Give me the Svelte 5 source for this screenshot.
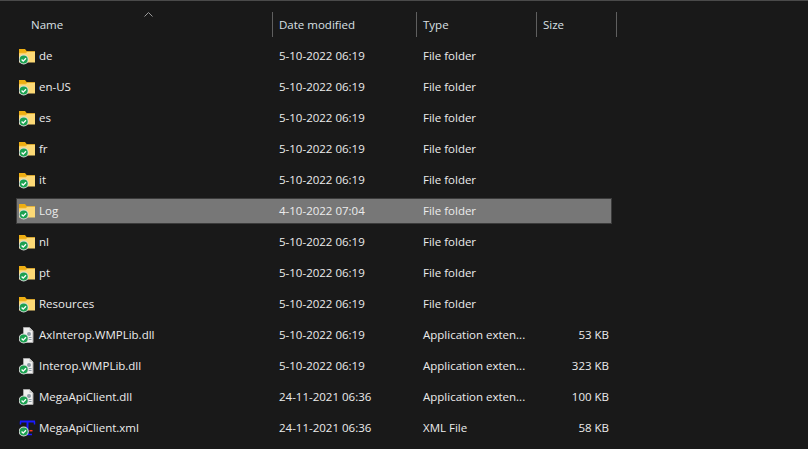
<script>
	const files = [
		{ name: 'de', date: '5-10-2022 06:19', type: 'File folder', size: '', icon: 'folder' },
		{ name: 'en-US', date: '5-10-2022 06:19', type: 'File folder', size: '', icon: 'folder' },
		{ name: 'es', date: '5-10-2022 06:19', type: 'File folder', size: '', icon: 'folder' },
		{ name: 'fr', date: '5-10-2022 06:19', type: 'File folder', size: '', icon: 'folder' },
		{ name: 'it', date: '5-10-2022 06:19', type: 'File folder', size: '', icon: 'folder' },
		{ name: 'Log', date: '4-10-2022 07:04', type: 'File folder', size: '', icon: 'folder', selected: true },
		{ name: 'nl', date: '5-10-2022 06:19', type: 'File folder', size: '', icon: 'folder' },
		{ name: 'pt', date: '5-10-2022 06:19', type: 'File folder', size: '', icon: 'folder' },
		{ name: 'Resources', date: '5-10-2022 06:19', type: 'File folder', size: '', icon: 'folder' },
		{ name: 'AxInterop.WMPLib.dll', date: '5-10-2022 06:19', type: 'Application exten...', size: '53 KB', icon: 'dll' },
		{ name: 'Interop.WMPLib.dll', date: '5-10-2022 06:19', type: 'Application exten...', size: '323 KB', icon: 'dll' },
		{ name: 'MegaApiClient.dll', date: '24-11-2021 06:36', type: 'Application exten...', size: '100 KB', icon: 'dll' },
		{ name: 'MegaApiClient.xml', date: '24-11-2021 06:36', type: 'XML File', size: '58 KB', icon: 'xml' }
	];
</script>

<div class="explorer">
	<div class="header">
		<div class="head name">Name<span class="caret"><svg width="9" height="5" viewBox="0 0 9 5"><path d="M.5 4.500l4-4 4 4" fill="none" stroke="#9a9a9a"/></svg></span></div>
		<div class="head">Date modified</div>
		<div class="head">Type</div>
		<div class="head last">Size</div>
	</div>
	{#each files as f}
		<div class="row" class:selected={f.selected}>
			<div class="cell name">
				<svg class="icon" width="17" height="17" viewBox="0 0 17 17">
					{#if f.icon === 'folder'}
						<path d="M0 1h6l2 2.500v2H0z" fill="#eeae12"/>
						<path d="M0 5h6.500l1.500-1.500h8v11H0z" fill="#fcd976"/>
						<path d="M0 4.600h6.500L8 3.100h8v.6H8.300L6.800 5.200H0z" fill="#f0b429"/>
					{:else if f.icon === 'dll'}
						<path d="M4.500 .5h6l3.500 3.500v11.500H4.500z" fill="#efefef" stroke="#a8a8a8"/>
						<path d="M10.500 .5v3.500H14z" fill="#c8c8c8"/>
						<circle cx="10" cy="7" r="2" fill="#8d9ba6"/>
						<path d="M9.500 10.500h3M9.500 12.500h3" stroke="#8d9ba6"/>
					{:else}
						<path d="M1 1.500h15M8.500 1.500v12.500" stroke="#1a1aff" stroke-width="2" fill="none"/>
						<path d="M1.500 1.500v3M15.500 1.500v3" stroke="#1a1aff" stroke-width="1.500"/>
						<path d="M5 14.500h8" stroke="#1a1aff" stroke-width="1.500"/>
						<path d="M10.500 10.700h3" stroke="#ff3b1f" stroke-width="1.500"/>
					{/if}
					<circle cx="4.700" cy="11.500" r="5" fill="#dcdcdc"/>
					<circle cx="4.700" cy="11.500" r="4" fill="#1ba150"/>
					<path d="M2.600 11.500l1.600 1.600 2.800-2.900" fill="none" stroke="#fff" stroke-width="1.300"/>
				</svg>
				<span>{f.name}</span>
			</div>
			<div class="cell">{f.date}</div>
			<div class="cell">{f.type}</div>
			<div class="cell size">{f.size}</div>
		</div>
	{/each}
</div>

<style>
	:global(body) {
		background: #191919;
		overflow: hidden;
	}

	.explorer {
		height: 449px;
		box-sizing: border-box;
		border-top: 1px solid #4a4a4a;
		background: #191919;
		color: #ececec;
		font-family: "Open Sans", "Noto Sans", sans-serif;
		font-size: 11.5px;
		overflow: hidden;
	}

	.header {
		display: grid;
		grid-template-columns: 256px 144px 120px 81px;
		margin: 11px 0 6px 16px;
		width: 601px;
		height: 25px;
	}

	.head {
		border-left: 1px solid #5f5f5f;
		padding-left: 6px;
		line-height: 25px;
		color: #d9e0e5;
	}

	.head.name {
		position: relative;
		border-left: 0;
		padding-left: 15px;
	}

	.head.last {
		border-right: 1px solid #5f5f5f;
	}

	.caret {
		position: absolute;
		left: 128px;
		top: 0;
		line-height: 0;
	}

	.row {
		display: grid;
		grid-template-columns: 256px 144px 120px 76px;
		margin: 0 0 5px 16px;
		width: 596px;
		height: 26px;
		box-sizing: border-box;
		line-height: 24px;
		border: 1px solid transparent;
	}

	.row.selected {
		background: #777777;
		border-color: #3b3b3b;
	}

	.cell {
		padding-left: 6px;
		white-space: nowrap;
	}

	.cell.name {
		display: flex;
		align-items: center;
		gap: 3px;
		padding-left: 2px;
	}

	.cell.size {
		padding: 0 4px 0 0;
		text-align: right;
	}

	.icon {
		flex: none;
		margin-top: 1px;
	}
</style>
